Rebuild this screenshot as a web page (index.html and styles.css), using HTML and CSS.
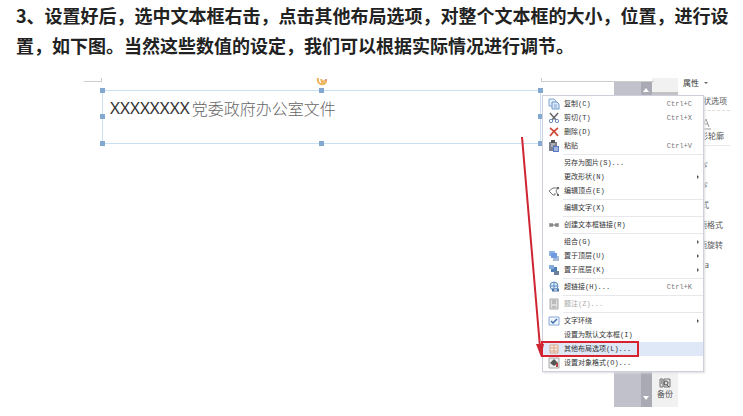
FILE: index.html
```
<!DOCTYPE html>
<html lang="zh-CN">
<head>
  <meta charset="utf-8">
  <title>文本框布局选项</title>
  <link rel="stylesheet" href="styles.css">
</head>
<body>
  <p class="step">3、设置好后，选中文本框右击，点击其他布局选项，对整个文本框的大小，位置，进行设置，如下图。当然这些数值的设定，我们可以根据实际情况进行调节。</p>

  <div class="editor">
    <div class="page">
      <span class="corner corner-left"></span>
      <span class="corner corner-right"></span>
      <div class="textbox">
        <span class="latin">XXXXXXXX</span>
        <span class="hanzi">党委政府办公室文件</span>
        <svg class="rotate" viewBox="0 0 12 8"><path d="M2 0C1 4 4 7 7 6C9 6 10 4 10 3M5 1l1 3 3-1" fill="none" stroke="#eeb45c" stroke-width="2"/><circle cx="10" cy="2" r="1" fill="#d8715c"/></svg>
        <i class="handle h-tl"></i><i class="handle h-t"></i><i class="handle h-tr"></i>
        <i class="handle h-l"></i><i class="handle h-r"></i>
        <i class="handle h-bl"></i><i class="handle h-b"></i><i class="handle h-br"></i>
      </div>
    </div>

    <div class="gutter">
      <div class="scrollbar">
        <button type="button" aria-label="向上滚动"><svg viewBox="0 0 10 10"><path d="M2 7h6L5 3z" fill="#fff"/></svg></button>
        <button type="button" aria-label="向下滚动"><svg viewBox="0 0 10 10"><path d="M2 3h6L5 7z" fill="#fff"/></svg></button>
      </div>
    </div>

    <div class="sidebar">
      <div class="side-top"></div>
      <button type="button" class="backup">
        <svg viewBox="0 0 12 12"><path d="M1 2h3v8H1zM5 2h6v8H5z" fill="#ddd" stroke="#777"/><circle cx="7" cy="6" r="2" fill="none" stroke="#555"/><path d="M8 8l2 2M2 4h1M2 6h1" stroke="#555"/></svg>
        备份
      </button>
    </div>

    <div class="props">
      <div class="props-title">属性 <span class="caret"></span></div>
      <div class="tab">形状选项</div>
      <div class="outline">
        <svg viewBox="0 0 12 12"><path d="M2 9L6 1l3 8M4 6h4M1 11h10" fill="none" stroke="#999"/></svg>
        图形轮廓
      </div>
      <ul class="props-list">
        <li class="cut">形状ゞ</li>
        <li class="cut">形状ゞ</li>
        <li class="cut">形状式</li>
        <li>边随格式</li>
        <li>边随旋转</li>
        <li class="cut">形状a</li>
      </ul>
    </div>

    <div class="menu">
      <ul>
        <li><button type="button"><svg viewBox="0 0 12 12"><path d="M1 1h5l2 2v5H1z" fill="#e6effa" stroke="#7fa4d4"/><path d="M4 4h5l2 2v5H4z" fill="#dce9f8" stroke="#6c96cc"/><path d="M6 7h3M6 9h3" stroke="#7fa4d4"/></svg><span>复制(C)</span><kbd>Ctrl+C</kbd></button></li>
        <li><button type="button"><svg viewBox="0 0 12 12"><path d="M2 1l6 7M10 1L4 8" fill="none" stroke="#666" stroke-width="1.5"/><circle cx="3" cy="9" r="1.7" fill="none" stroke="#6c8fc0"/><circle cx="9" cy="9" r="1.7" fill="none" stroke="#6c8fc0"/></svg><span>剪切(T)</span><kbd>Ctrl+X</kbd></button></li>
        <li><button type="button"><svg viewBox="0 0 12 12"><path d="M2 2c3 2 6 5 8 8M10 2C7 4 4 7 2 10" fill="none" stroke="#cf4a3a" stroke-width="1.6"/></svg><span>删除(D)</span></button></li>
        <li><button type="button"><svg viewBox="0 0 12 12"><path d="M1 2h8v9H1z" fill="#7d8290"/><path d="M3 0h4v3H3z" fill="#555"/><path d="M3 4h4M3 6h2" stroke="#ddd"/><path d="M5 6h6v6H5z" fill="#5b78c4"/><path d="M6 8h4M6 10h4" stroke="#e8effa"/></svg><span>粘贴</span><kbd>Ctrl+V</kbd></button></li>
        <li class="sep"></li>
        <li><button type="button"><i class="blank"></i><span>另存为图片(S)...</span></button></li>
        <li><button type="button" class="sub"><i class="blank"></i><span>更改形状(N)</span></button></li>
        <li><button type="button"><svg viewBox="0 0 12 12"><path d="M5 3L1 6l4 4h2V8M5 3h5L8 6l2 4" fill="none" stroke="#777"/><path d="M9 2h2v2H9zM9 9h2v2H9z" fill="#666"/></svg><span>编辑顶点(E)</span></button></li>
        <li class="sep"></li>
        <li><button type="button"><i class="blank"></i><span>编辑文字(X)</span></button></li>
        <li class="sep"></li>
        <li><button type="button"><svg viewBox="0 0 12 12"><path d="M1 4h4v4H1zM7 4h4v4H7z" fill="#aaa"/><path d="M2 6h8" stroke="#666"/></svg><span>创建文本框链接(R)</span></button></li>
        <li class="sep"></li>
        <li><button type="button" class="sub"><i class="blank"></i><span>组合(G)</span></button></li>
        <li><button type="button" class="sub"><svg viewBox="0 0 12 12"><path d="M5 6h6v5H5z" fill="#a8bcd8"/><path d="M1 1h6v5H1z" fill="#8fb2e4"/><path d="M3 3h6v5H3z" fill="#6f9ae0"/></svg><span>置于顶层(U)</span></button></li>
        <li><button type="button" class="sub"><svg viewBox="0 0 12 12"><path d="M3 3h6v5H3z" fill="#4f7fb8"/><path d="M1 1h5v4H1z" fill="#86aad8"/><path d="M6 7h5v4H6z" fill="#6c7f9c"/></svg><span>置于底层(K)</span></button></li>
        <li class="sep"></li>
        <li><button type="button"><svg viewBox="0 0 12 12"><circle cx="6" cy="5" r="4" fill="#dcebf8" stroke="#5b8cc0"/><path d="M2 5h8M6 1v7" stroke="#5b8cc0"/><path d="M4 9h7" stroke="#4872a8" stroke-width="3"/><path d="M6 9h3" stroke="#fff"/></svg><span>超链接(H)...</span><kbd>Ctrl+K</kbd></button></li>
        <li class="sep"></li>
        <li><button type="button" disabled><svg viewBox="0 0 12 12"><path d="M2 1h8v10H2z" fill="#ddd" stroke="#aaa"/><path d="M4 3h4M4 5h4M4 9h4" stroke="#999"/></svg><span>题注(Z)...</span></button></li>
        <li class="sep"></li>
        <li><button type="button" class="sub"><svg viewBox="0 0 12 12"><path d="M1 2h10v8H1z" fill="#f2f7fd" stroke="#86a8d8"/><path d="M3 6l2 2 4-4" fill="none" stroke="#3f6dac" stroke-width="1.5"/></svg><span>文字环绕</span></button></li>
        <li><button type="button"><i class="blank"></i><span>设置为默认文本框(I)</span></button></li>
        <li class="picked"><button type="button"><svg viewBox="0 0 12 12"><path d="M2 2h8v8H2z" fill="#f8eadf" stroke="#d9a98e"/><path d="M2 5h8M6 2v8M2 8h8" stroke="#d9a98e"/></svg><span>其他布局选项(L)...</span></button></li>
        <li><button type="button"><svg viewBox="0 0 12 12"><path d="M1 1h10v10H1z" fill="#eee" stroke="#aaa"/><path d="M2 6l4-4 4 4-4 3z" fill="#555"/><path d="M9 6v4" stroke="#b44" stroke-width="2"/></svg><span>设置对象格式(O)...</span></button></li>
      </ul>
      <svg class="arrow" viewBox="0 0 28 222"><path d="M4 0L22 210" stroke="#cf2532" stroke-width="2"/><path d="M18 207h8l-3 13z" fill="#cf2532"/></svg>
    </div>
  </div>
</body>
</html>
```
FILE: styles.css
```
*, *::after {box-sizing: border-box}
body {
  margin: 0;
  background: #fff;
  font-family: "Noto Sans CJK SC", sans-serif;
}
ul {
  list-style: none;
  margin: 0;
  padding: 0;
}
button {
  border: none;
  background: none;
  padding: 0;
  margin: 0;
  font: inherit;
  color: inherit;
  cursor: pointer;
}
.step {
  margin: 0;
  padding: 0 12px 0 16px;
  font-size: 18px;
  line-height: 30px;
  font-weight: bold;
  color: #222;
}

/* editor window */
.editor {
  position: relative;
  display: grid;
  grid-template-columns: 1fr 38px 26px 65px;
  min-height: 329px;
  margin-top: 18px;
  font-size: 8px;
  line-height: 10px;
  color: #555;
}
.page {
  position: relative;
  padding: 12px 73px 0 102px;
}
.corner {
  position: absolute;
  top: 0;
  height: 4px;
  border-bottom: 1px solid #ccc;
}
.corner-left {
  left: 84px;
  width: 18px;
  border-right: 1px solid #ccc;
}
.corner-right {
  left: calc(100% - 73px);
  right: -40px;
  border-left: 1px solid #ccc;
}
.textbox {
  position: relative;
  display: flex;
  gap: 2px;
  min-height: 54px;
  padding: 4px 7px;
  border: 1px solid #c8e0f2;
  line-height: 26px;
}
.latin {
  font-family: "Noto Sans", sans-serif;
  font-size: 17px;
  color: #333;
}
.hanzi {
  font-size: 16px;
  font-weight: 300;
  color: #666;
}
.rotate {
  position: absolute;
  left: calc(50% - 6px);
  top: -13px;
  width: 12px;
  height: 8px;
}
.handle {
  position: absolute;
  width: 5px;
  height: 5px;
  background: #82a8d2;
}
.h-tl, .h-t, .h-tr {top: -3px;}
.h-l, .h-r {top: calc(50% - 3px);}
.h-bl, .h-b, .h-br {bottom: -3px;}
.h-tl, .h-l, .h-bl {left: -3px;}
.h-t, .h-b {left: calc(50% - 3px);}
.h-tr, .h-r, .h-br {right: -3px;}

.gutter {
  display: flex;
  justify-content: flex-end;
  margin-top: 4px;
  background: #c0c1cb;
}
.scrollbar {
  display: flex;
  flex-direction: column;
  justify-content: space-between;
  width: 11px;
  padding: 3px 0 4px;
  background: #a9aab3;
}
.scrollbar button {height: 10px;}
.scrollbar svg {
  display: block;
  width: 10px;
  height: 10px;
}

.sidebar {
  display: flex;
  flex-direction: column;
  justify-content: space-between;
  background: #f1f1f1;
}
.side-top {
  height: 17px;
  border-bottom: 3px solid #c2c2c4;
}
.backup {
  display: flex;
  flex-direction: column;
  align-items: center;
  padding-bottom: 8px;
}
.backup svg {
  width: 12px;
  height: 12px;
}

/* property pane, left part is under the menu */
.props-title {
  display: flex;
  align-items: center;
  gap: 5px;
  padding-left: 5px;
  color: #333;
}
.caret {
  border: 2px solid transparent;
  border-top-color: #666;
  border-bottom: none;
}
.tab {
  margin-right: 13px;
  padding: 8px 3px 4px 0;
  border-bottom: 1px dashed #ddd;
  text-align: right;
}
.outline {
  display: flex;
  flex-direction: column;
  align-items: flex-end;
  margin-right: 13px;
  padding: 6px 6px 4px 0;
  border-bottom: 1px solid #e8e8e8;
}
.outline svg {
  width: 12px;
  height: 14px;
  margin-right: 12px;
}
.props-list {
  padding: 9px 20px 0 0;
  text-align: right;
  line-height: 20px;
}
.props-list .cut {padding-right: 14px;}

/* context menu */
.menu {
  position: absolute;
  top: 17px;
  right: 39px;
  width: 162px;
  padding: 1px 0;
  border: 1px solid #cdd0dc;
  background: #fff;
  box-shadow: 1px 1px 2px #ddd;
  font-family: "Liberation Mono", "Noto Sans CJK SC", monospace;
  font-size: 7px;
  color: #333;
}
.menu li button {
  display: flex;
  align-items: center;
  gap: 4px;
  width: 100%;
  height: 14px;
  padding: 0 11px 0 5px;
  text-align: left;
  white-space: nowrap;
}
.menu button svg, .blank {
  flex: none;
  width: 12px;
  height: 12px;
}
.menu kbd {
  margin-left: auto;
  font: inherit;
  color: #777;
}
.menu .sub::after {
  content: "";
  margin-left: auto;
  margin-right: -7px;
  border: 2px solid transparent;
  border-left-color: #555;
  border-right: none;
}
.menu button:disabled {color: #aaa;}
.menu .sep {
  height: 1px;
  margin: 1px 0 1px 20px;
  background: #e8e8ec;
}
.menu .picked {
  position: relative;
  background: #dfe8f6;
}
.picked::after {
  content: "";
  position: absolute;
  left: -2px;
  top: -1px;
  bottom: -1px;
  width: 98px;
  border: 2px solid #d8222f;
}
.arrow {
  position: absolute;
  left: -25px;
  top: 41px;
  width: 28px;
  height: 222px;
}
```
